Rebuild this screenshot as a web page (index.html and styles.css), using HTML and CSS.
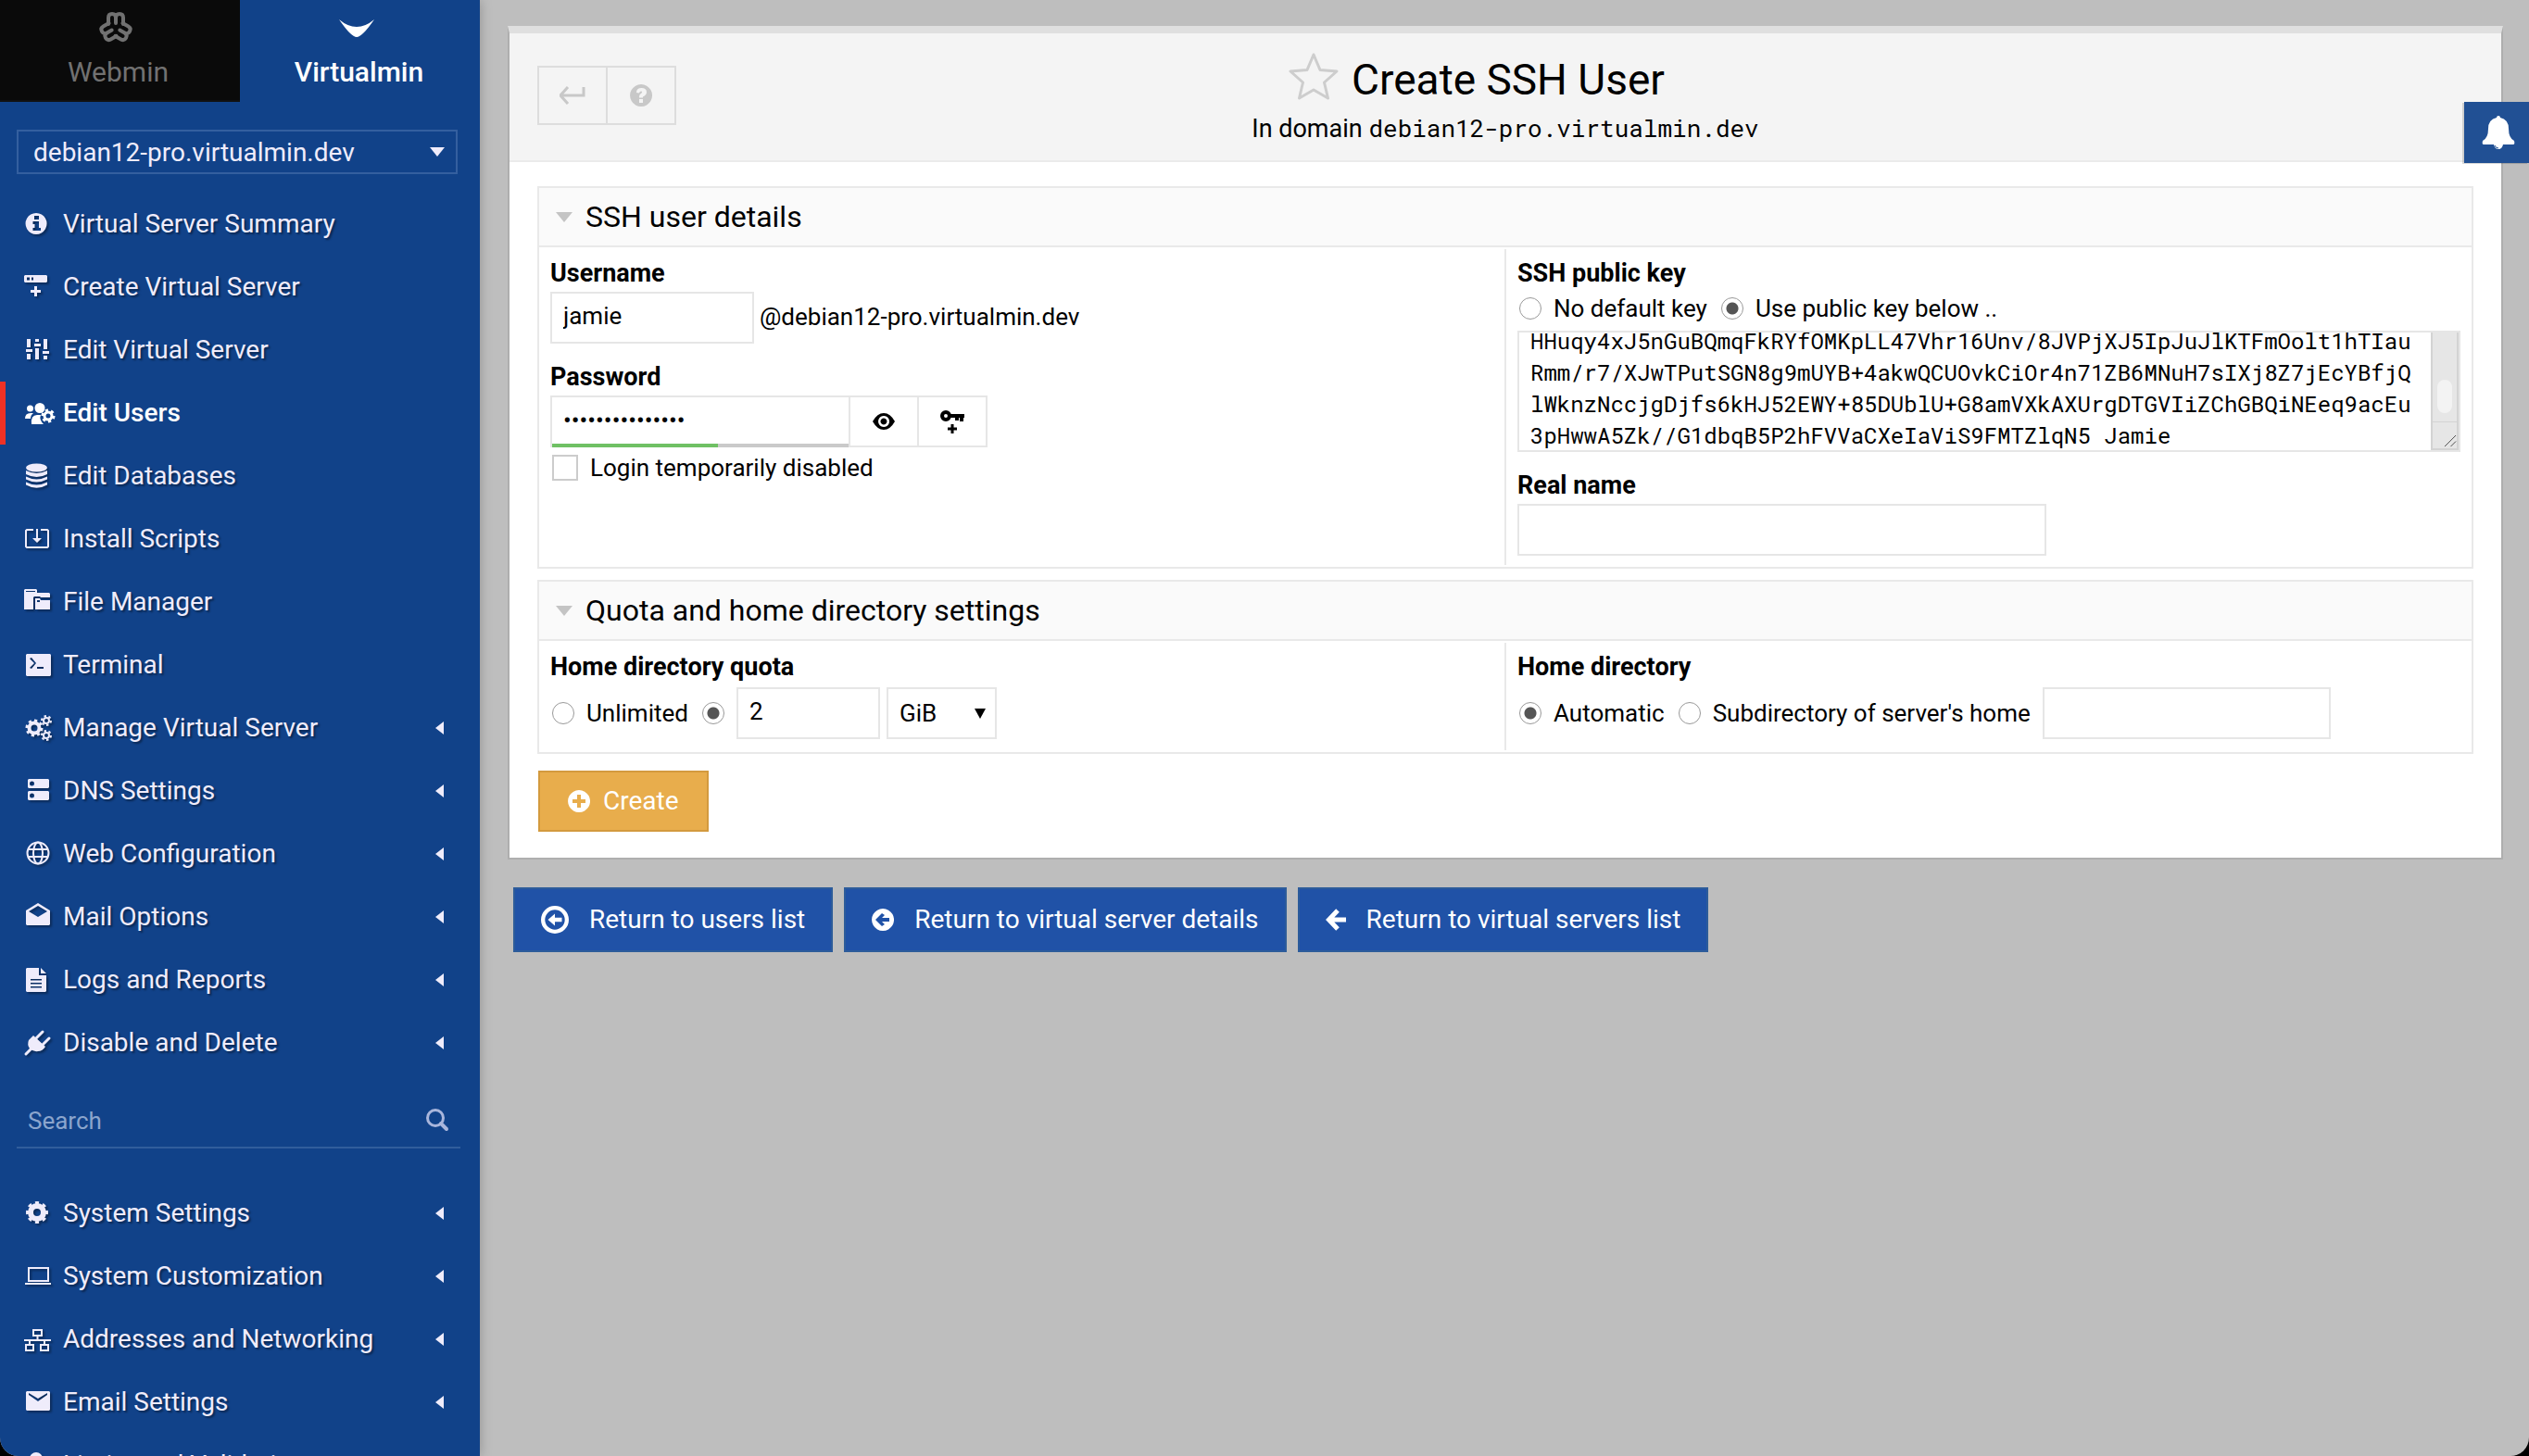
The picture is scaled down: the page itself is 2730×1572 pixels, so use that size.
FILE: index.html
```html
<!DOCTYPE html>
<html lang="en">
<head>
<meta charset="utf-8">
<title>Create SSH User</title>
<link rel="stylesheet" href="styles.css">
</head>
<body>
<aside class="sidebar">
  <nav class="tabs">
    <a class="tab" href="#webmin">
      <svg class="tab-icon" viewBox="-20 -20 40 40"><g fill="none" stroke="currentColor" stroke-width="4" stroke-linecap="round" stroke-linejoin="round"><g id="lobe"><path d="M-8-4V-11Q-8-15-4-15Q0-15 0-11V-5M0-11Q0-15 4-15Q8-15 8-11V-4"/></g><use href="#lobe" transform="rotate(120)"/><use href="#lobe" transform="rotate(240)"/></g></svg>
      <span>Webmin</span>
    </a>
    <a class="tab tab-active" href="#virtualmin">
      <svg class="tab-icon" viewBox="-20 -20 40 40"><path fill="currentColor" d="M-19-9Q0 7 19-9Q6 10 0 10Q-6 10-19-9Z"/></svg>
      <span>Virtualmin</span>
    </a>
  </nav>
  <select class="domain-select" aria-label="Domain"><option>debian12-pro.virtualmin.dev</option></select>
  <ul class="menu">
    <li><a href="#summary"><svg class="icon" viewBox="0 0 32 32"><path fill-rule="evenodd" d="M15 4a11.500 11.500 0 1 0 .1 0ZM13 7h5v4h-5ZM11.500 13H18v7h2v3h-8.500v-3h2v-4h-2Z"/></svg>Virtual Server Summary</a></li>
    <li><a href="#create"><svg class="icon" viewBox="0 0 32 32"><path fill-rule="evenodd" d="M3 3h23l1 1v6l-1 1H3l-1-1V4ZM5 5.500v3h3v-3ZM10 5.500v3h2v-3ZM13 15h3v4h4v3h-4v4h-3v-4H9v-3h4Z"/></svg>Create Virtual Server</a></li>
    <li><a href="#edit"><svg class="icon" viewBox="0 0 32 32"><path d="M5 4h4v9H5ZM4 15h7v3H4ZM5 20h4v6H5ZM14 4h4v3h-4ZM13 9h7v3h-7ZM14 14h4v12h-4ZM23 4h4v11h-4ZM22 17h7v3h-7ZM23 22h4v4h-4Z"/></svg>Edit Virtual Server</a></li>
    <li class="current"><a href="#users"><svg class="icon" viewBox="0 0 32 32"><circle cx="8.500" cy="11" r="3.500"/><circle cx="19" cy="10.500" r="5.500"/><path d="M3 22q0-6 6-6h3q-3 2-3 6ZM10 28q-1-10 6-10h4q-2 5 3 10Z"/><circle cx="28" cy="19" r="4" fill="none" stroke="currentColor" stroke-width="3"/><circle cx="28" cy="19" r="6" fill="none" stroke="currentColor" stroke-width="3" pathLength="12" stroke-dasharray="1 1"/></svg>Edit Users</a></li>
    <li><a href="#databases"><svg class="icon" viewBox="0 0 32 32"><ellipse cx="15.500" cy="7" rx="11.500" ry="4.500"/><path d="M4 10q11.500 6 23 0v4q-11.500 6-23 0ZM4 16.500q11.500 6 23 0v3q-11.500 6-23 0ZM4 22.500q11.500 6 23 0v3q-11.500 6.500-23 0Z"/></svg>Edit Databases</a></li>
    <li><a href="#scripts"><svg class="icon" viewBox="0 0 32 32"><path fill="none" stroke="currentColor" stroke-width="2" d="M12 6H5L4 7v17l1 1h22l1-1V7l-1-1h-7"/><path d="M15 5h2v10h4l-5 5-5-5h4Z"/></svg>Install Scripts</a></li>
    <li><a href="#files"><svg class="icon" viewBox="0 0 32 32"><path fill-rule="evenodd" d="M2 3l1-1h12l1 1v3h13l1 1v4H20l-1-1h-6l-1 1v13H2ZM4 4v1h10V4ZM14 12h5l1 2h10v10H14ZM16 14v2h3v-2Z"/></svg>File Manager</a></li>
    <li><a href="#terminal"><svg class="icon" viewBox="0 0 32 32"><path fill-rule="evenodd" d="M5 4h25l1 1v22l-1 1H5l-1-1V5ZM8 9l5 5-5 5 2 1 5-6-5-6ZM16 18h7v2h-7Z"/></svg>Terminal</a></li>
    <li><a href="#manage"><svg class="icon" viewBox="0 0 32 32"><g fill="none" stroke="currentColor"><circle cx="13" cy="16" r="5.500" stroke-width="4"/><circle cx="13" cy="16" r="8" stroke-width="3" pathLength="16" stroke-dasharray="1 1"/><circle cx="26" cy="8" r="3" stroke-width="2"/><circle cx="26" cy="8" r="5" stroke-width="2" pathLength="12" stroke-dasharray="1 1"/><circle cx="26" cy="24" r="3" stroke-width="2"/><circle cx="26" cy="24" r="5" stroke-width="2" pathLength="12" stroke-dasharray="1 1"/></g></svg>Manage Virtual Server<span class="caret"></span></a></li>
    <li><a href="#dns"><svg class="icon" viewBox="0 0 32 32"><path fill-rule="evenodd" d="M7 3h21l1 1v8l-1 1H7l-1-1V4ZM8 8a2.500 2.500 0 1 0 5 0a2.500 2.500 0 1 0-5 0ZM7 16h21l1 1v8l-1 1H7l-1-1v-8ZM8 21a2.500 2.500 0 1 0 5 0a2.500 2.500 0 1 0-5 0Z"/></svg>DNS Settings<span class="caret"></span></a></li>
    <li><a href="#web"><svg class="icon" viewBox="0 0 32 32"><g fill="none" stroke="currentColor" stroke-width="2"><circle cx="17" cy="15" r="11.500"/><ellipse cx="17" cy="15" rx="5" ry="11.500"/><path d="M6.500 11h21M6.500 19h21"/></g></svg>Web Configuration<span class="caret"></span></a></li>
    <li><a href="#mail"><svg class="icon" viewBox="0 0 32 32"><path fill-rule="evenodd" d="M17 1l13 8v15l-1 1H5l-1-1V9ZM7 10l10 6 10-6-10-6Z"/></svg>Mail Options<span class="caret"></span></a></li>
    <li><a href="#logs"><svg class="icon" viewBox="0 0 32 32"><path fill-rule="evenodd" d="M5 3h13v8h8v17l-1 1H5l-1-1V4ZM9 15v1.500h12V15ZM9 19v1.500h12V19ZM9 23v1.500h12V23ZM20 3l6 6h-6Z"/></svg>Logs and Reports<span class="caret"></span></a></li>
    <li><a href="#disable"><svg class="icon" viewBox="0 0 32 32"><path fill="none" stroke="currentColor" stroke-width="3" stroke-linecap="round" d="M15 11l7-7M22 18l7-7M4 28l6-6"/><path d="M12 8l13 12q-3 5-8 5-5 1-9-3-3-4-1-9 2-2 5-5Z"/></svg>Disable and Delete<span class="caret"></span></a></li>
  </ul>
  <div class="search">
    <input type="search" placeholder="Search" aria-label="Search">
    <svg class="search-icon" viewBox="0 0 26 26"><g fill="none" stroke="currentColor" stroke-width="3" stroke-linecap="round"><circle cx="11" cy="11" r="8.500"/><path stroke-width="4" d="M17 17l6 6"/></g></svg>
  </div>
  <ul class="menu">
    <li><a href="#system"><svg class="icon" viewBox="0 0 32 32"><g fill="none" stroke="currentColor"><circle cx="16" cy="15" r="7" stroke-width="6"/><circle cx="16" cy="15" r="10.500" stroke-width="3" pathLength="16" stroke-dasharray="1 1" stroke-dashoffset=".5"/></g></svg>System Settings<span class="caret"></span></a></li>
    <li><a href="#custom"><svg class="icon" viewBox="0 0 32 32"><path fill="none" stroke="currentColor" stroke-width="2" d="M7 7h21v14H7Z"/><path d="M3 23h28v2H3Z"/></svg>System Customization<span class="caret"></span></a></li>
    <li><a href="#network"><svg class="icon" viewBox="0 0 32 32"><path fill="none" stroke="currentColor" stroke-width="2" d="M12 6h9v6h-9ZM4 22h8v6H4ZM20 22h8v6h-8ZM2 17h29M16.500 12v5M8 17v5M24 17v5"/></svg>Addresses and Networking<span class="caret"></span></a></li>
    <li><a href="#email"><svg class="icon" viewBox="0 0 32 32"><path fill-rule="evenodd" d="M5 4h24l1 1v19l-1 1H5l-1-1V5ZM7 8l10 7 10-7v-2l-10 6-10-6Z"/></svg>Email Settings<span class="caret"></span></a></li>
    <li><a href="#limits"><svg class="icon" viewBox="0 0 32 32"><circle cx="15" cy="9" r="7"/><path d="M4 28q0-11 11-11t11 11Z"/></svg>Limits and Validation<span class="caret"></span></a></li>
  </ul>
</aside>

<main class="main">
  <section class="panel">
    <header class="panel-head">
      <div class="tools">
        <button type="button" aria-label="Back"><svg viewBox="0 0 28 28"><path fill="none" stroke="currentColor" stroke-width="3" d="M26 5v9H1M9 5l-8 9 8 9"/></svg></button>
        <button type="button" aria-label="Help"><svg viewBox="0 0 28 28"><path fill="currentColor" fill-rule="evenodd" d="M14 2a12 12 0 1 0 .1 0ZM9 11q0-5 5.500-5T20 10.500q0 3-4 5v1h-4q-.5-3.500 2.500-5 1.500-2-.5-2-1.500 0-2 2ZM12 18h4v4h-4Z"/></svg></button>
      </div>
      <div class="heading">
        <h1><svg class="star" viewBox="0 0 54 52"><path fill="none" stroke="currentColor" stroke-width="3" stroke-linejoin="round" d="M27 3l7 16.500 18 1.500-13.500 12 4 17L27 41l-15.500 9 4-17L2 21l18-1.500Z"/></svg>Create SSH User</h1>
        <p>In domain <code>debian12-pro.virtualmin.dev</code></p>
      </div>
    </header>

    <form class="form">
      <section class="group">
        <h2><span class="fold"></span>SSH user details</h2>
        <div class="cells">
          <div class="cell">
            <label class="name" for="username">Username</label>
            <div class="line"><input class="box w-user" id="username" type="text" value="jamie"><span class="suffix">@debian12-pro.virtualmin.dev</span></div>
            <label class="name name-next" for="password">Password</label>
            <div class="password">
              <input class="box" id="password" type="password" value="aaaaaaaaaaaaaaa">
              <button type="button" aria-label="Show password"><svg viewBox="0 0 28 28"><path fill="currentColor" fill-rule="evenodd" d="M2 14Q7 5 14 5t12 9q-5 9-12 9T2 14ZM14 8a6 6 0 1 0 .1 0ZM14 10.500a3.500 3.500 0 1 1-.1 0Z"/></svg></button>
              <button type="button" aria-label="Generate password"><svg viewBox="0 0 28 28"><g fill="none" stroke="currentColor"><circle cx="7" cy="8" r="4" stroke-width="4"/><path stroke-width="4" d="M11 8h16M24 8v6M19 8v5"/><path stroke-width="3" d="M14 17v10M9 22h10"/></g></svg></button>
            </div>
            <label class="choice check"><input type="checkbox"><span>Login temporarily disabled</span></label>
          </div>
          <div class="cell">
            <label class="name" for="sshkey">SSH public key</label>
            <div class="choices key-choices">
              <label class="choice"><input type="radio" name="key"><span>No default key</span></label>
              <label class="choice"><input type="radio" name="key" checked><span>Use public key below ..</span></label>
            </div>
            <div class="key">
              <textarea id="sshkey" spellcheck="false">



HHuqy4xJ5nGuBQmqFkRYfOMKpLL47Vhr16Unv/8JVPjXJ5IpJuJlKTFmOolt1hTIauRmm/r7/XJwTPutSGN8g9mUYB+4akwQCUOvkCiOr4n71ZB6MNuH7sIXj8Z7jEcYBfjQlWknzNccjgDjfs6kHJ52EWY+85DUblU+G8amVXkAXUrgDTGVIiZChGBQiNEeq9acEu3pHwwA5Zk//G1dbqB5P2hFVVaCXeIaViS9FMTZlqN5 Jamie</textarea>
              <div class="scrollbar" aria-hidden="true">
                <span class="thumb"></span>
                <svg class="grip" viewBox="0 0 28 28"><path fill="none" stroke="#444" stroke-width="1" d="M14 27L27 14M21 27l6-6"/></svg>
              </div>
            </div>
            <label class="name name-next" for="realname">Real name</label>
            <div class="line"><input class="box w-real" id="realname" type="text"></div>
          </div>
        </div>
      </section>

      <section class="group">
        <h2><span class="fold"></span>Quota and home directory settings</h2>
        <div class="cells">
          <div class="cell">
            <span class="name">Home directory quota</span>
            <div class="choices">
              <label class="choice"><input type="radio" name="quota"><span>Unlimited</span></label>
              <label class="choice"><input type="radio" name="quota" checked aria-label="Limited"></label>
              <input class="box w-quota" type="text" value="2" aria-label="Quota">
              <select class="box unit" aria-label="Unit"><option>GiB</option></select>
            </div>
          </div>
          <div class="cell">
            <span class="name">Home directory</span>
            <div class="choices">
              <label class="choice"><input type="radio" name="home" checked><span>Automatic</span></label>
              <label class="choice"><input type="radio" name="home"><span>Subdirectory of server's home</span></label>
              <input class="box w-home" type="text" aria-label="Subdirectory">
            </div>
          </div>
        </div>
      </section>

      <button class="create" type="button"><svg viewBox="0 0 24 24"><path fill="currentColor" fill-rule="evenodd" d="M12 0a12 12 0 1 0 .1 0ZM10 5h4v5h5v4h-5v5h-4v-5H5v-4h5Z"/></svg>Create</button>
    </form>
  </section>

  <nav class="returns">
    <a href="#users"><svg class="ret-ring" viewBox="0 0 28 28"><circle cx="14" cy="14" r="12" fill="none" stroke="currentColor" stroke-width="4"/><path fill="currentColor" d="M7 14l7-6v4h7v4h-7v4Z"/></svg>Return to users list</a>
    <a href="#details"><svg class="ret-disc" viewBox="0 0 24 24"><path fill="currentColor" fill-rule="evenodd" d="M12 0a12 12 0 1 0 .1 0ZM4 12l7-7 3 2-3 3h8v4h-8l3 3-3 2Z"/></svg>Return to virtual server details</a>
    <a href="#servers"><svg class="ret-arrow" viewBox="0 0 22 24"><path fill="none" stroke="currentColor" stroke-width="5" d="M22 12H4M13 2L3.500 12l9.500 10"/></svg>Return to virtual servers list</a>
  </nav>
</main>

<button class="bell" type="button" aria-label="Notifications"><svg viewBox="0 0 36 38"><path fill="currentColor" d="M18 1q2 0 2 2 9 2 9 12 0 10 6 13 1 4-1 4H23q-1 5-5 5t-5-5H2q-2 0-1-4 6-3 6-13Q7 5 16 3q0-2 2-2Z"/><path d="M14 33q1 3 4 3" fill="none" stroke="#235295" stroke-width="1"/></svg></button>
<script src="script.js"></script>
</body>
</html>
```
FILE: script.js
```javascript
// Show the end of the public key, as after a paste.
document.getElementById('sshkey').scrollTop = 122;
```
FILE: styles.css
```css
* { box-sizing: border-box; }

html { background: #000; }

body {
  margin: 0;
  height: 100vh;
  display: flex;
  overflow: hidden;
  background: #bebebe;
  border-radius: 0 0 20px 20px;
  font: 26px/34px Roboto, "Liberation Sans", sans-serif;
  color: #000;
}

button, input, select, textarea { font: inherit; color: inherit; border-radius: 0; }
a { color: inherit; text-decoration: none; }

/* Sidebar */
.sidebar {
  flex: 0 0 518px;
  overflow: hidden;
  background: #114289;
  color: #efecfb;
  font-size: 28px;
  box-shadow: 0 0 12px rgba(0, 0, 0, .25);
}

.tabs { display: grid; grid-template-columns: 1fr 1fr; height: 110px; }
.tab {
  display: flex;
  flex-direction: column;
  align-items: center;
  gap: 11px;
  padding: 10px 4px 0 0;
  background: #0a0a0a;
  color: #717171;
  border-bottom: 2px solid #111;
  font-size: 30px;
}
.tab-icon { width: 40px; height: 40px; margin-right: 6px; }
.tab-active { padding-right: 2px; background: none; color: #fff; font-weight: 500; border-color: transparent; }

.domain-select {
  appearance: none;
  display: block;
  width: 476px;
  height: 48px;
  margin: 30px 0 20px 18px;
  padding: 1px 16px 0;
  border: 2px solid #345f9f;
  background: url("data:image/svg+xml,%3Csvg xmlns='http://www.w3.org/2000/svg' width='16' height='10'%3E%3Cpath fill='%23efecfb' d='M0 0h16l-8 10z'/%3E%3C/svg%3E") no-repeat right 12px center;
}

.menu { list-style: none; margin: 0; padding: 0; }
.menu a {
  display: flex;
  align-items: center;
  gap: 12px;
  height: 68px;
  padding: 0 39px 0 24px;
  text-shadow: 2px 2px 2px rgba(0, 0, 0, .4);
}
.icon {
  flex: none;
  width: 32px;
  height: 32px;
  overflow: visible;
  fill: currentColor;
  filter: drop-shadow(2px 2px 1px rgba(0, 0, 0, .35));
}
.caret {
  margin-left: auto;
  border: 7px solid transparent;
  border-right: 9px solid;
  border-left: 0;
}
.current a {
  padding-left: 18px;
  border-left: 6px solid #ef3125;
  color: #fff;
  font-weight: 500;
  text-shadow: none;
}
.current .icon { filter: none; }

.search {
  display: flex;
  align-items: center;
  justify-content: space-between;
  width: 479px;
  height: 62px;
  margin: 18px 0 36px 18px;
  padding: 2px 12px 0;
  border-bottom: 2px solid #315d9c;
  color: #a9b6dc;
}
.search input {
  width: 400px;
  padding: 2px 0 0;
  border: 0;
  background: none;
  font-size: 26px;
}
.search input::placeholder { color: #8ba5cd; }
.search-icon { width: 26px; height: 26px; }

/* Main panel */
.main { flex: 1; min-width: 0; padding: 28px 28px 0 30px; }
.panel {
  border: 2px solid #aeaeae;
  border-top: 8px solid #dfdfdf;
  background: #fff;
}
.panel-head {
  display: grid;
  grid-template-columns: 150px 1fr 150px;
  padding: 0 30px;
  height: 139px;
  background: #f4f4f4;
  border-bottom: 2px solid #ebebeb;
}
.tools { display: flex; margin-top: 35px; height: 64px; border: 2px solid #ddd; }
.tools button {
  flex: 1;
  display: grid;
  place-items: center;
  padding: 0;
  border: 0;
  background: none;
  color: #c8c8c8;
}
.tools button + button { border-left: 2px solid #ddd; }
.tools svg { width: 28px; height: 28px; }
.heading { text-align: center; padding-top: 20px; }
.heading h1 {
  display: flex;
  align-items: center;
  justify-content: center;
  gap: 14px;
  margin: 0;
  font-size: 46px;
  line-height: 56px;
  font-weight: 400;
}
.star { width: 54px; height: 52px; margin: 0 0 8px -62px; color: #cdcdcd; }
.heading p { margin: 5px 0 0; font-size: 27px; }
.heading code { font-family: "Roboto Mono", "Liberation Mono", monospace; font-size: 26px; }

/* Form */
.form { padding: 26px 30px 28px; }
.group { border: 2px solid #e9e9e9; margin-bottom: 12px; }
.group h2 {
  display: flex;
  align-items: center;
  gap: 14px;
  height: 64px;
  margin: 0;
  padding-left: 18px;
  background: #fafafa;
  border-bottom: 2px solid #e9e9e9;
  font-size: 32px;
  font-weight: 400;
}
.fold { border: 9px solid transparent; border-top: 11px solid #c4c4c4; border-bottom: 0; }
.cells { display: grid; grid-template-columns: calc(50% - 1px) 1fr; padding: 2px 0; }
.cell { padding: 9px 12px 10px; }
.cell + .cell { border-left: 2px solid #e9e9e9; }
.name { display: block; font-size: 27px; font-weight: 700; margin-bottom: 3px; }
.name-next { margin-top: 19px; }
.box { height: 56px; padding: 0 12px 4px; border: 2px solid #e6e6e6; background: #fff; outline: 0; }
.line { display: flex; align-items: center; gap: 6px; }
.suffix { padding-bottom: 2px; }
.w-user { width: 220px; }
.w-real { width: 571px; }
.w-quota { width: 155px; }
.w-home { width: 311px; }

.password { display: flex; width: 472px; height: 56px; }
.password .box {
  width: 324px;
  border-bottom: 0;
  background: linear-gradient(90deg, #6fc064 56%, #cacaca 56%) bottom / 100% 4px no-repeat border-box;
}
.password button {
  flex: 1;
  display: grid;
  place-items: center;
  padding: 0;
  border: 2px solid #e6e6e6;
  border-left: 0;
  background: #fff;
}
.password svg { width: 28px; height: 28px; }

.choices { display: flex; align-items: center; gap: 13px; height: 60px; }
.key-choices { height: 36px; margin-bottom: 6px; }
.choice { display: flex; align-items: center; gap: 13px; padding-left: 2px; }
.choice input { appearance: none; margin: 0; border: 2px solid #ccc; background: #fff; }
.choice input[type="radio"] { width: 24px; height: 24px; border: 1px solid #999; border-radius: 50%; }
.choice input[type="radio"]:checked { background: radial-gradient(circle, #555 6px, #fff 7px); }
.check { margin-top: 5px; }
.check input { width: 28px; height: 28px; }

.key {
  display: flex;
  height: 131px;
  border: 2px solid #e6e6e6;
}
.key textarea {
  flex: 1;
  min-width: 0;
  padding: 12px;
  border: 0;
  outline: 0;
  overflow: hidden;
  resize: none;
  word-break: break-all;
  font: 24px/34px "Roboto Mono", "Liberation Mono", monospace;
}
.scrollbar {
  display: flex;
  flex-direction: column;
  align-items: center;
  justify-content: flex-end;
  width: 30px;
  border: 2px solid #d3d3d3;
  border-top: 0;
  background: #e6e6e6;
}
.thumb { width: 16px; height: 36px; margin-bottom: 9px; border-radius: 8px; background: #f3f3f3; }
.grip { width: 100%; height: 29px; border-top: 1px solid #d3d3d3; }

.unit {
  appearance: none;
  width: 119px;
  margin-left: -6px;
  padding-bottom: 0;
  background: #fff url("data:image/svg+xml,%3Csvg xmlns='http://www.w3.org/2000/svg' width='12' height='11'%3E%3Cpath d='M0 0h12l-6 11z'/%3E%3C/svg%3E") no-repeat right 10px center;
}

.create {
  display: flex;
  align-items: center;
  gap: 14px;
  height: 66px;
  margin: 18px 0 0 1px;
  padding: 0 30px;
  border: 2px solid #d39a3e;
  background: #e8ad4c;
  color: #fff;
  font-size: 28px;
}
.create svg { width: 24px; height: 24px; }

.returns { display: flex; gap: 12px; padding: 30px 0 0 6px; }
.returns a {
  display: flex;
  align-items: center;
  gap: 22px;
  height: 70px;
  padding: 0 28px;
  border: 2px solid #2d5c9a;
  background: #2052a7;
  color: #fff;
  font-size: 28px;
}
.ret-ring { width: 30px; height: 30px; }
.ret-disc { width: 24px; height: 24px; }
.ret-arrow { width: 22px; height: 24px; }

.bell {
  position: fixed;
  top: 110px;
  right: 0;
  width: 70px;
  height: 66px;
  display: grid;
  place-items: center;
  padding: 0 0 0 4px;
  border: 0;
  background: #215094;
  color: #fff;
  box-shadow: -2px 1px 0 rgba(0, 0, 0, .15);
}
.bell svg { width: 36px; height: 38px; }
```
